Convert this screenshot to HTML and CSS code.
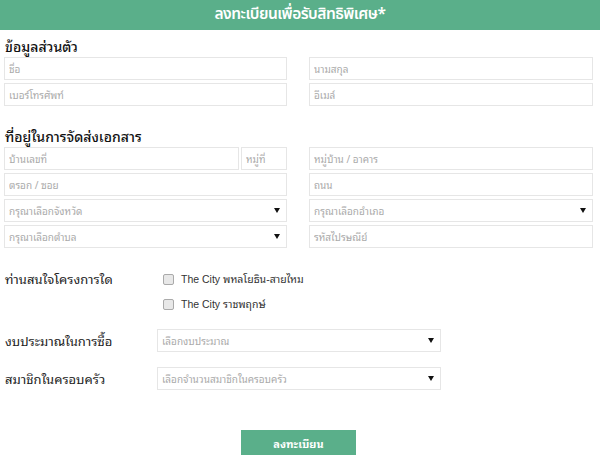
FILE: index.html
```html
<!DOCTYPE html>
<html lang="th">
<head>
<meta charset="utf-8">
<title>ลงทะเบียนเพื่อรับสิทธิพิเศษ</title>
<link rel="stylesheet" href="styles.css">
</head>
<body>
<header class="header">ลงทะเบียนเพื่อรับสิทธิพิเศษ*</header>
<form class="form">
  <h2 class="section-title first">ข้อมูลส่วนตัว</h2>
  <div class="grid">
    <input class="field" placeholder="ชื่อ">
    <input class="field" placeholder="นามสกุล">
    <input class="field" placeholder="เบอร์โทรศัพท์">
    <input class="field" placeholder="อีเมล์">
  </div>

  <h2 class="section-title second">ที่อยู่ในการจัดส่งเอกสาร</h2>
  <div class="grid">
    <div class="split">
      <input class="field" placeholder="บ้านเลขที่">
      <input class="field" placeholder="หมู่ที่">
    </div>
    <input class="field" placeholder="หมู่บ้าน / อาคาร">
    <input class="field" placeholder="ตรอก / ซอย">
    <input class="field" placeholder="ถนน">
    <div class="select"><span>กรุณาเลือกจังหวัด</span><i class="arrow"></i></div>
    <div class="select"><span>กรุณาเลือกอำเภอ</span><i class="arrow"></i></div>
    <div class="select"><span>กรุณาเลือกตำบล</span><i class="arrow"></i></div>
    <input class="field" placeholder="รหัสไปรษณีย์">
  </div>

  <div class="row interest">
    <div class="label">ท่านสนใจโครงการใด</div>
    <div class="checks">
      <label class="check"><span class="box"></span>The City พหลโยธิน-สายไหม</label>
      <label class="check"><span class="box"></span>The City ราชพฤกษ์</label>
    </div>
  </div>

  <div class="row budget">
    <div class="label">งบประมาณในการซื้อ</div>
    <div class="select wide"><span>เลือกงบประมาณ</span><i class="arrow"></i></div>
  </div>

  <div class="row family">
    <div class="label">สมาชิกในครอบครัว</div>
    <div class="select wide"><span>เลือกจำนวนสมาชิกในครอบครัว</span><i class="arrow"></i></div>
  </div>

  <div class="actions">
    <button type="button" class="submit">ลงทะเบียน</button>
  </div>
</form>
</body>
</html>
```
FILE: styles.css
```css
* { box-sizing: border-box; }
html, body { margin: 0; padding: 0; background: #fff; }
body {
  font-family: "Noto Sans Thai Looped", "Tahoma", "Noto Sans Thai", "Liberation Sans", "DejaVu Sans", sans-serif;
  color: #222;
  width: 600px;
  height: 459px;
  overflow: hidden;
}
.header {
  height: 30px;
  background: #5aaf8a;
  color: #fff;
  text-align: center;
  font-family: "Noto Sans Thai", "Liberation Sans", sans-serif;
  font-size: 15.5px;
  letter-spacing: -0.5px;
  line-height: 30px;
  font-weight: 600;
}
.form { padding: 0 7px 0 4px; }
.section-title {
  margin: 0;
  font-size: 14px;
  font-weight: 500;
  line-height: 18px;
  padding-left: 1px;
  color: #111;
}
.section-title.first { margin-top: 7px; margin-bottom: 2px; }
.section-title.second { margin-top: 21px; margin-bottom: 2px; }
.grid {
  display: grid;
  grid-template-columns: 283px 284px;
  column-gap: 22px;
  row-gap: 3px;
  grid-auto-rows: 23px;
}
.split {
  display: grid;
  grid-template-columns: 235px 46px;
  column-gap: 2px;
}
.field, .select {
  height: 23px;
  border: 1px solid #e6e6e6;
  background: #fff;
  font-family: inherit;
  font-size: 10px;
  padding: 0 4px;
  color: #aaa;
  outline: none;
  width: 100%;
  margin: 0;
  border-radius: 0;
}
.field::placeholder { color: #aaa; }
.select {
  display: flex;
  align-items: center;
  justify-content: space-between;
  padding: 0 6px 0 4px;
}
.arrow {
  width: 0; height: 0;
  border-left: 3px solid transparent;
  border-right: 3px solid transparent;
  border-top: 5px solid #111;
}
.row { display: flex; align-items: flex-start; }
.label {
  font-size: 13px;
  color: #222;
  padding-left: 1px;
}
.interest { margin-top: 22px; }
.interest .label { width: 159px; line-height: 18px; }
.checks { display: flex; flex-direction: column; gap: 7px; }
.check {
  display: flex;
  align-items: center;
  font-size: 10.5px;
  color: #333;
  line-height: 18px;
  font-family: "Liberation Sans", "Noto Sans Thai Looped", "Tahoma", "Noto Sans Thai", sans-serif;
}
.box {
  width: 11px; height: 11px;
  border: 1px solid #aaa;
  background: #e8e8e8;
  border-radius: 2px;
  margin-right: 7px;
}
.budget { margin-top: 16px; align-items: center; }
.family { margin-top: 15px; align-items: center; }
.budget .label, .family .label { width: 153px; }
.select.wide { width: 284px; }
.actions { display: flex; justify-content: center; margin-top: 40px; }
.submit {
  width: 115px;
  height: 25px;
  border: 0;
  background: #5aaf8a;
  color: #fff;
  font-family: inherit;
  font-size: 11px;
  font-weight: 700;
}
```
